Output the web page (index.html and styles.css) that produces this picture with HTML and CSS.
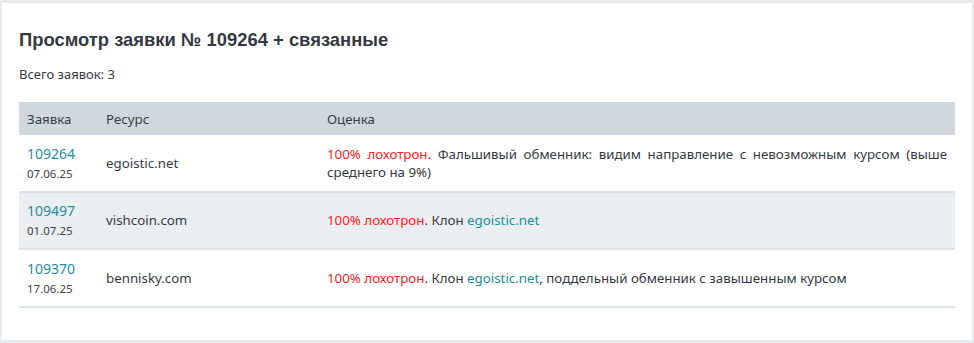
FILE: index.html
```html
<!DOCTYPE html>
<html lang="ru">
<head>
<meta charset="utf-8">
<title>Просмотр заявки</title>
<link rel="stylesheet" href="styles.css">
</head>
<body>
<div class="card">
  <h1 class="title">Просмотр заявки № 109264 + связанные</h1>
  <p class="total">Всего заявок: 3</p>
  <table class="tbl">
    <thead>
      <tr>
        <th class="c-id">Заявка</th>
        <th class="c-res">Ресурс</th>
        <th class="c-eval">Оценка</th>
      </tr>
    </thead>
    <tbody>
      <tr>
        <td class="c-id"><a class="link" href="#">109264</a><div class="date">07.06.25</div></td>
        <td class="c-res">egoistic.net</td>
        <td class="c-eval"><span class="scam">100% лохотрон</span>. Фальшивый обменник: видим направление с невозможным курсом (выше среднего на 9%)</td>
      </tr>
      <tr class="alt">
        <td class="c-id"><a class="link" href="#">109497</a><div class="date">01.07.25</div></td>
        <td class="c-res">vishcoin.com</td>
        <td class="c-eval"><span class="scam">100% лохотрон</span>. Клон <a class="link" href="#">egoistic.net</a></td>
      </tr>
      <tr>
        <td class="c-id"><a class="link" href="#">109370</a><div class="date">17.06.25</div></td>
        <td class="c-res">bennisky.com</td>
        <td class="c-eval"><span class="scam">100% лохотрон</span>. Клон <a class="link" href="#">egoistic.net</a>, поддельный обменник с завышенным курсом</td>
      </tr>
    </tbody>
  </table>
</div>
</body>
</html>
```

FILE: styles.css
```css
html, body {
  margin: 0;
  padding: 0;
  background: #e9ecef;
}
body {
  padding: 3px 2px 3px 2px;
  font-family: "Noto Sans", "Open Sans", sans-serif;
  font-size: 13px;
  color: #363a3e;
}
.card {
  background: #fff;
  height: 337px;
  box-sizing: border-box;
  padding: 24px 17px 0 17px;
}
.title {
  margin: 0;
  font-family: "Liberation Sans", Arial, sans-serif;
  font-weight: bold;
  font-size: 18.4px;
  line-height: 26px;
  color: #343a40;
}
.total {
  margin: 12px 0 0 0;
  line-height: 18px;
  font-size: 13px;
}
.tbl {
  margin-top: 19px;
  width: 936px;
  border-collapse: collapse;
  font-size: 13.3px;
}
.tbl th {
  background: #d0d8de;
  font-weight: normal;
  text-align: left;
  height: 33px;
  padding: 0 8px;
  color: #3a3f44;
  vertical-align: middle;
}
.tbl td {
  padding: 8px 8px;
  border-bottom: 2px solid #dfe2e5;
  vertical-align: middle;
  height: 39.5px;
  line-height: 18px;
}
.tbl tr.alt td {
  background: #ebeef1;
}
.c-id { width: 63px; }
.c-res { width: 205px; }
.c-eval { text-align: justify; }
.link {
  color: #1a8f9c;
  text-decoration: none;
}
.c-id .link {
  font-size: 14px;
  line-height: 18px;
}
.date {
  font-size: 11.5px;
  line-height: 15px;
  color: #444;
  margin-top: 3px;
}
.scam {
  color: #ff1a1a;
}
```
